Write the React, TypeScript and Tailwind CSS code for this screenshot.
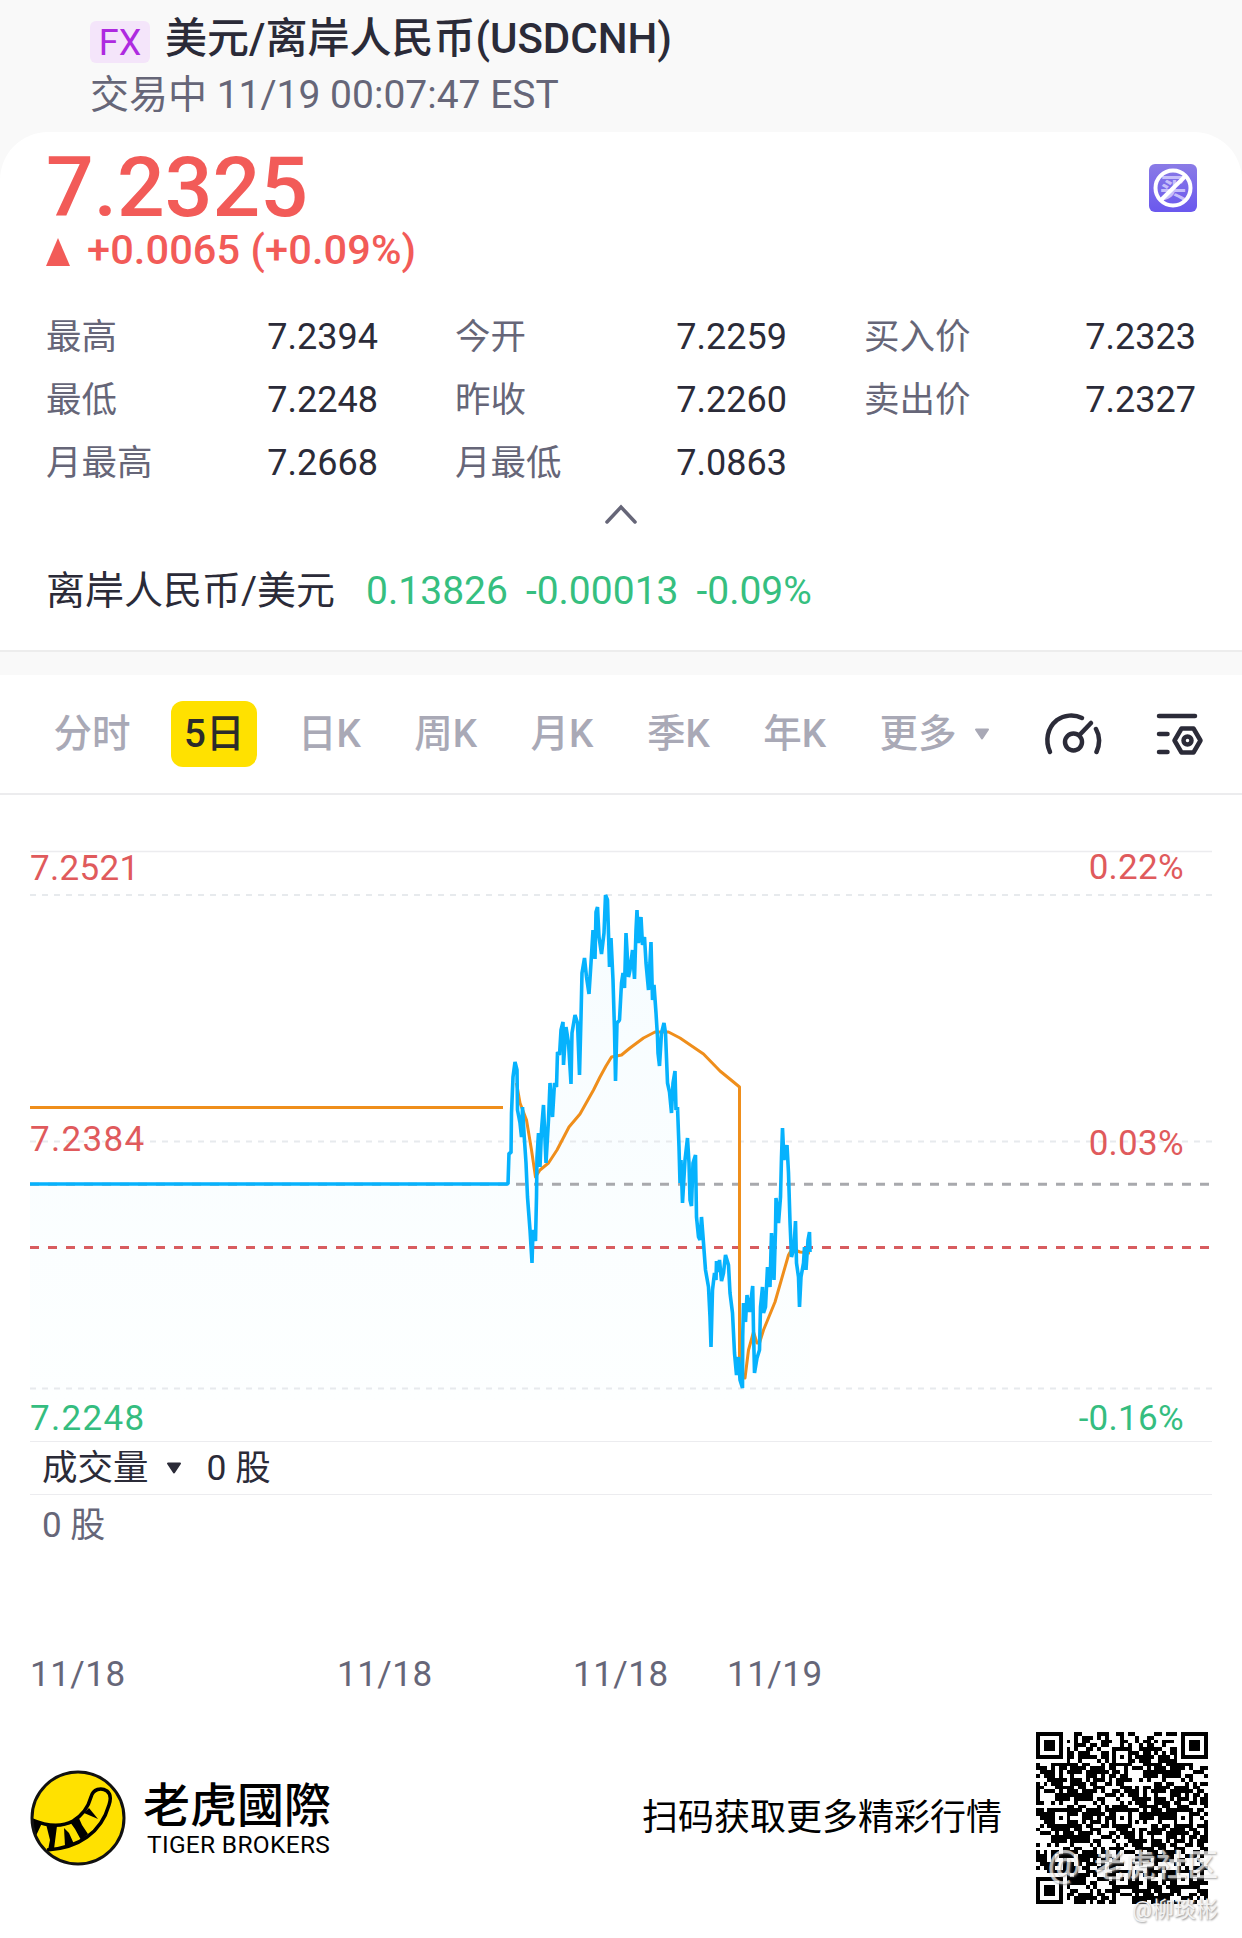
import { ReactNode } from 'react';

const stats = [
  { label: '最高', value: '7.2394' },
  { label: '今开', value: '7.2259' },
  { label: '买入价', value: '7.2323' },
  { label: '最低', value: '7.2248' },
  { label: '昨收', value: '7.2260' },
  { label: '卖出价', value: '7.2327' },
  { label: '月最高', value: '7.2668' },
  { label: '月最低', value: '7.0863' },
];

const tabs = ['分时', '5日', '日K', '周K', '月K', '季K', '年K'];

const pricePoints =
  '30,1184 508,1184 509,1153 511,1153 511.5,1113 513,1077 515,1062 517,1070 517.5,1110 520,1123 521.5,1137 522.5,1107 524,1133 526,1163 527.5,1197 530,1230 532,1263 533,1230 535.5,1241 536.5,1197 537,1157 538.5,1133 540,1167 541.5,1130 543.5,1105 546,1163 548.5,1120 550,1083 552.5,1117 554.5,1083 556.5,1087 557.5,1052 559.5,1055 561,1030 563,1022 563.5,1065 566,1027 568.5,1043 571,1084 572,1033 575,1015 577.5,1023 579.5,1075 581,1017 582,973 584.5,958 586.5,977 589,994 591,963 593,930 595,959 596,912 597.5,907 599,937 601.5,954 604,933 605.5,895 607.5,900 609.5,967 611,938 613,980 614.5,1030 615.5,1081 617,1023 619.5,1020 621.5,983 623,973 624.5,988 626,933 628.5,977 630,970 632.5,950 634.5,979 636,930 637,910 638.5,943 641,917 642.5,945 644.5,937 646,963 648.5,990 651,942 652.5,1000 654,985 656,1013 657.5,1037 658,1053 659.5,1066 661.5,1033 664,1023 665.5,1033 667.5,1083 669.5,1092 671.5,1113 673,1083 675,1071 676,1110 677.5,1107 679,1147 680,1183 681,1160 682.5,1203 685,1160 687.5,1138 689,1163 690,1200 691.5,1206 693,1163 695.5,1155 696.5,1217 698.5,1237 700,1240 701.5,1217 703.5,1243 705.5,1270 708.5,1287 710,1317 711,1347 712.5,1290 714.5,1273 716,1280 716.5,1261 718.5,1272 719.5,1260 721.5,1281 723.5,1273 725.5,1255 728.5,1265 730,1293 732.5,1313 734.5,1353 736.5,1375 738.5,1357 740,1380 742.5,1388 742.7,1337 743.5,1303 745.5,1322 747,1295 749.5,1312 752.7,1286 753.5,1330 754.5,1373 757,1358 759.5,1350 760.5,1307 762.5,1287 763.5,1313 765.5,1307 767.5,1267 770,1287 771.5,1233 774,1280 775.5,1230 776,1198 778.5,1223 780.5,1197 781.5,1157 782.5,1128 784,1160 787,1145 788.5,1173 790,1222 791.5,1257 794,1247 795.5,1221 796.5,1263 798.5,1277 799.5,1307 801,1277 803.5,1263 804.5,1247 806,1270 808,1240 809.5,1232 810,1252';

const averagePoints =
  '516.5,1083 520,1103 526.5,1120 531.5,1150 535.5,1177 540,1170 548.5,1163 557,1150 569,1127 580,1114 593.5,1090 600,1077 606,1066 611.5,1057 621.5,1055 630,1048 643.5,1038 655,1032 668.5,1032 680,1038 703.5,1054 720,1071 733.5,1082 739.5,1087 739.5,1376 745,1378 748.5,1350 753.5,1332 757,1343 759.5,1343 763.5,1330 775,1302 788.5,1255 792,1249 800,1252 810,1253';

const QR_SIZE = 45;

// finder and alignment patterns are fixed, the rest is filled from a seeded generator
function buildQr() {
  const cells: boolean[][] = [];
  let seed = 20241119;
  for (let y = 0; y < QR_SIZE; y++) {
    cells.push([]);
    for (let x = 0; x < QR_SIZE; x++) {
      seed = (seed * 1103515245 + 12345) % 2147483648;
      cells[y].push(seed / 2147483648 > 0.48);
    }
  }
  const stamp = (cx: number, cy: number, reach: number) => {
    for (let dy = -reach; dy <= reach; dy++) {
      for (let dx = -reach; dx <= reach; dx++) {
        const x = cx + dx;
        const y = cy + dy;
        if (x < 0 || y < 0 || x >= QR_SIZE || y >= QR_SIZE) continue;
        const d = Math.max(Math.abs(dx), Math.abs(dy));
        cells[y][x] = reach === 4 ? d !== 2 && d !== 4 : d !== 1;
      }
    }
  };
  const marks = [6, 22, 38];
  marks.forEach((y) => marks.forEach((x) => stamp(x, y, 2)));
  stamp(3, 3, 4);
  stamp(41, 3, 4);
  stamp(3, 41, 4);
  return cells
    .map((row, y) => row.map((on, x) => (on ? `M${x} ${y}h1v1h-1z` : '')).join(''))
    .join('');
}

const qrPath = buildQr();

function Caret({ className }: { className: string }) {
  return (
    <svg viewBox="0 0 16 12" className={className}>
      <path d="M2 1.5h12L8 10.500z" fill="currentColor" stroke="currentColor" strokeWidth="2" strokeLinejoin="round" />
    </svg>
  );
}

function NoBuyBadge() {
  return (
    <svg viewBox="0 0 48 48" className="size-12">
      <defs>
        <linearGradient id="badge" x1="0" y1="0" x2="0" y2="1">
          <stop offset="0" stopColor="#8a7be6" />
          <stop offset="1" stopColor="#6a58ee" />
        </linearGradient>
      </defs>
      <rect width="48" height="48" rx="6" fill="url(#badge)" />
      <text x="24" y="34" textAnchor="middle" className="fill-[#c6befa] font-['Noto_Sans_CJK_SC',sans-serif] text-[27px] font-bold">
        买
      </text>
      <circle cx="24" cy="24" r="17.500" fill="none" stroke="#fff" strokeWidth="4" />
      <path d="M12 36L36.500 12" stroke="#fff" strokeWidth="4" />
    </svg>
  );
}

function GaugeIcon() {
  return (
    <svg viewBox="0 0 60 46" className="h-[46px] w-[60px]" fill="none" stroke="#2b2b38" strokeWidth="4.500" strokeLinecap="round">
      <path d="M7 41C2 30 4 17 14 9C21 4 31 3 39 7" />
      <path d="M53 18C57 25 57 33 53.500 41" />
      <circle cx="30.500" cy="31" r="8.500" />
      <path d="M36.500 24L48 12" />
    </svg>
  );
}

function ChartSettingsIcon() {
  return (
    <svg viewBox="0 0 50 46" className="h-[46px] w-[50px]" fill="none" stroke="#2b2b38" strokeWidth="4.500" strokeLinecap="round" strokeLinejoin="round">
      <path d="M4 5H40" />
      <path d="M4 23H12.500" />
      <path d="M4 41H12.500" />
      <path d="M26.500 17.500H38.500L45.500 29.500L38.500 41.500H26.500L19.500 29.500Z" />
      <circle cx="32.500" cy="29.500" r="4" />
    </svg>
  );
}

function TigerLogo() {
  return (
    <svg viewBox="0 0 96 96" className="size-24">
      <defs>
        <clipPath id="coin">
          <circle cx="48" cy="48" r="46" />
        </clipPath>
      </defs>
      <circle cx="48" cy="48" r="46" fill="#ffe100" />
      <g clipPath="url(#coin)">
        <path
          d="M0 49C18 57 32 57 43 51C53 45 58 38 61 27C63 19 71 17 77 21C81 24 81 29 79 35C75 49 67 60 57 67C46 75 32 79 17 80"
          fill="none"
          stroke="#000"
          strokeWidth="3.500"
        />
        <path d="M0 48L12 53L5 68L0 64Z" />
        <path d="M16 54L27 56L24 79L18 80L20 70Z" />
        <path d="M34 58L39 63L44 74L35 76Z" />
        <path d="M40 52L48 46L52 55L58 64L51 70L45 59Z" />
        <path d="M54 43L59 38L68 49Z" />
      </g>
      <circle cx="48" cy="48" r="46" fill="none" stroke="#111" strokeWidth="3" />
    </svg>
  );
}

interface AxisLabelProps {
  x: number;
  y: number;
  end?: boolean;
  down?: boolean;
  spacing?: number;
  children: ReactNode;
}

function AxisLabel({ x, y, end, down, spacing = 1.3, children }: AxisLabelProps) {
  return (
    <text
      x={x}
      y={y}
      textAnchor={end ? 'end' : 'start'}
      letterSpacing={end ? 0.3 : spacing}
      fontSize="35"
      fill={down ? '#35bd7f' : '#e05a5c'}
    >
      {children}
    </text>
  );
}

function PriceChart() {
  return (
    <svg viewBox="0 795 1242 646" className="block h-[646px] w-full">
      <defs>
        <linearGradient id="area" x1="0" y1="895" x2="0" y2="1400" gradientUnits="userSpaceOnUse">
          <stop offset="0" stopColor="#f6fcff" />
          <stop offset="1" stopColor="#fdffff" />
        </linearGradient>
      </defs>
      <polygon points={`${pricePoints} 810,1400 30,1400`} fill="url(#area)" />
      <path d="M30 851.500H1212" stroke="#ececef" strokeWidth="1.500" />
      <path d="M30 895H1212M30 1141.500H1212M30 1388.500H1212" stroke="#e7eaed" strokeWidth="1.800" strokeDasharray="6 6" />
      <path d="M30 1184.300H1212" stroke="#a8a9ad" strokeWidth="3" strokeDasharray="9 9" />
      <path d="M30 1247.500H1212" stroke="#d85c5f" strokeWidth="3" strokeDasharray="9 9" />
      <path d="M30 1107.500H503" stroke="#ef8e1b" strokeWidth="3" />
      <polyline points={averagePoints} fill="none" stroke="#ef8e1b" strokeWidth="3" strokeLinejoin="round" />
      <polyline points={pricePoints} fill="none" stroke="#06b2fd" strokeWidth="3.600" strokeLinejoin="bevel" />
      <AxisLabel x={30} y={880} spacing={0.3}>7.2521</AxisLabel>
      <AxisLabel x={30} y={1151}>7.2384</AxisLabel>
      <AxisLabel x={30} y={1430} down>7.2248</AxisLabel>
      <AxisLabel x={1184} y={879} end>0.22%</AxisLabel>
      <AxisLabel x={1184} y={1155} end>0.03%</AxisLabel>
      <AxisLabel x={1184} y={1430} end down>-0.16%</AxisLabel>
    </svg>
  );
}

export default function App() {
  return (
    <div className="h-[1938px] w-[1242px] overflow-hidden bg-[#f9f9f9] font-[Roboto,'Noto_Sans_CJK_SC',sans-serif] text-[#2b2b38]">
      <header className="h-[132px] pt-[14px] pl-[90px]">
        <div className="flex items-start">
          <span className="mt-[7px] h-[42px] w-[60px] rounded-md bg-[#f4e5fa] text-center text-4xl leading-[44px] text-[#ae2ae0]">
            FX
          </span>
          <h1 className="ml-[15px] text-[42px] leading-[50px] font-medium">美元/离岸人民币(USDCNH)</h1>
        </div>
        <p className="mt-1.5 text-[39px] leading-[50px] text-[#666678]">交易中 11/19 00:07:47 EST</p>
      </header>

      <section className="h-[518px] rounded-t-[48px] bg-white px-[46px] pt-[14px]">
        <div className="flex justify-between">
          <div className="font-medium text-[#f25b58]">
            <div className="text-[84px] leading-[84px]">7.2325</div>
            <div className="flex items-center text-[41.5px] leading-10 tracking-[0.1px]">
              <svg viewBox="0 0 24 28" className="mt-1 mr-[17px] h-7 w-6">
                <path d="M12 0L24 28H0Z" fill="currentColor" />
              </svg>
              +0.0065 (+0.09%)
            </div>
          </div>
          <div className="mt-[18px] -mr-px">
            <NoBuyBadge />
          </div>
        </div>

        <div className="mt-9 grid grid-cols-3 gap-x-[77px]">
          {stats.map((item) => (
            <div key={item.label} className="flex justify-between text-4xl leading-[63px]">
              <span className="text-[35.5px] text-[#666678]">{item.label}</span>
              <span>{item.value}</span>
            </div>
          ))}
        </div>

        <div className="flex h-[38px] items-center justify-center">
          <svg viewBox="0 0 34 22" className="h-[22px] w-[34px]">
            <path d="M3 19L17 4L31 19" fill="none" stroke="#666678" strokeWidth="3.500" strokeLinecap="round" />
          </svg>
        </div>

        <div className="mt-7 flex text-[39px] leading-[60px]">
          <span>离岸人民币/美元</span>
          <span className="ml-[31px] text-[#36bf80]">0.13826</span>
          <span className="ml-[18px] text-[#36bf80]">-0.00013</span>
          <span className="ml-[18px] text-[#36bf80]">-0.09%</span>
        </div>
      </section>

      <div className="h-[25px] border-t-2 border-[#ededed] bg-[#f9f9f9]" />

      <nav className="flex h-[120px] items-center gap-[27.5px] border-b-2 border-[#ececee] bg-white pl-[40.5px] text-[38.5px] font-medium text-[#a9a9b6]">
        {tabs.map((tab) => (
          <span
            key={tab}
            className={
              tab === '5日'
                ? 'rounded-xl bg-[#ffe100] px-[13px] leading-[66px] text-[#2b2b2b]'
                : 'px-[13px] leading-[66px]'
            }
          >
            {tab}
          </span>
        ))}
        <span className="flex items-center pl-[13px] leading-[66px]">
          更多
          <Caret className="ml-[17px] h-3 w-4" />
        </span>
        <div className="ml-[26px] flex items-center gap-[52px]">
          <GaugeIcon />
          <ChartSettingsIcon />
        </div>
      </nav>

      <main className="bg-white">
        <PriceChart />
        <div className="mx-[30px] flex h-[54px] items-center border-y-[1.5px] border-[#ececef] pl-3 text-[35.5px] leading-[52px]">
          成交量
          <Caret className="ml-[17px] h-3 w-4" />
          <span className="ml-[25px]">0 股</span>
        </div>
        <div className="mt-[6px] pl-[42px] text-[35px] leading-[50px] text-[#666678]">0 股</div>
        <div className="mt-[99px] flex pl-[30px] text-[35px] leading-[50px] tracking-[0.5px] text-[#666678]">
          <span className="w-[307px]">11/18</span>
          <span className="w-[236px]">11/18</span>
          <span className="w-[154px]">11/18</span>
          <span>11/19</span>
        </div>
      </main>

      <footer className="relative flex h-[240px] items-start bg-white pt-[32px] pl-[30px] text-black">
        <div className="flex h-[172px] items-center">
          <TigerLogo />
          <div className="ml-[17px] pt-1">
            <div className="text-[47px] leading-[50px] font-medium">老虎國際</div>
            <div className="pl-1 text-[24.500px] leading-7 tracking-[0.3px]">TIGER BROKERS</div>
          </div>
        </div>
        <div className="ml-auto flex h-[172px] items-center pr-[34px]">
          <span className="text-4xl">扫码获取更多精彩行情</span>
          <svg viewBox="0 0 45 45" className="ml-[34px] size-[172px]" shapeRendering="crispEdges">
            <path d={qrPath} />
          </svg>
        </div>
        <div className="absolute top-[141px] right-[24px] text-right leading-none text-[#f2f2f2] [text-shadow:1px_1px_2px_#8c8c8c]">
          <div className="text-[31px] leading-[46px] font-medium opacity-75">
            <span className="mr-[14px] text-[36px]">@</span>
            老虎社区
          </div>
          <div className="text-[22px] leading-[42px]">@柳琰彬</div>
        </div>
      </footer>
    </div>
  );
}
